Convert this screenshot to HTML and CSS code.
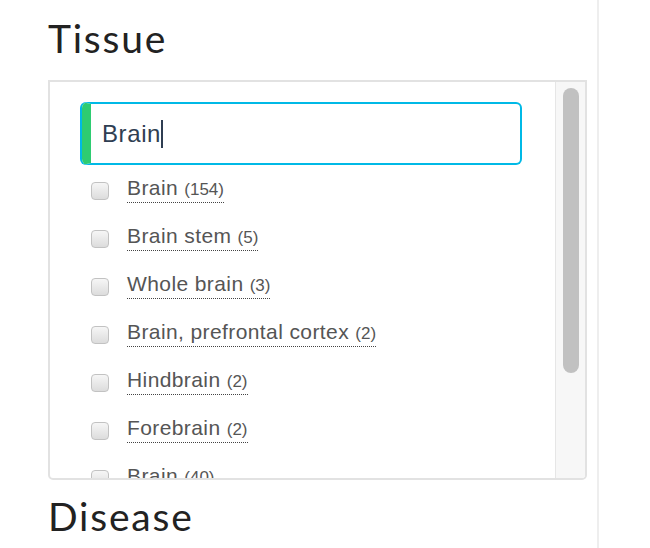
FILE: index.html
```html
<!DOCTYPE html>
<html>
<head>
<meta charset="utf-8">
<link rel="stylesheet" href="styles.css">
</head>
<body>
<div class="panel">
  <h2 class="heading">Tissue</h2>
  <div class="facet-box">
    <div class="facet-content">
      <div class="search">
        <span class="search-text">Brain</span><span class="caret"></span>
      </div>
      <ul class="options">
        <li class="option"><span class="checkbox"></span><span class="label">Brain <small class="count">(154)</small></span></li>
        <li class="option"><span class="checkbox"></span><span class="label">Brain stem <small class="count">(5)</small></span></li>
        <li class="option"><span class="checkbox"></span><span class="label">Whole brain <small class="count">(3)</small></span></li>
        <li class="option"><span class="checkbox"></span><span class="label">Brain, prefrontal cortex <small class="count">(2)</small></span></li>
        <li class="option"><span class="checkbox"></span><span class="label">Hindbrain <small class="count">(2)</small></span></li>
        <li class="option"><span class="checkbox"></span><span class="label">Forebrain <small class="count">(2)</small></span></li>
        <li class="option"><span class="checkbox"></span><span class="label">Brain <small class="count">(40)</small></span></li>
      </ul>
    </div>
    <div class="scroll-track"><div class="scroll-thumb"></div></div>
  </div>
  <h2 class="heading heading-next">Disease</h2>
</div>
</body>
</html>
```

FILE: styles.css
```css
html, body {
  margin: 0;
  padding: 0;
  background: #fff;
  height: 100%;
}

.panel {
  width: 599px;
  height: 548px;
  box-sizing: border-box;
  padding: 14px 10px 0 48px;
  border-right: 2px solid #eeeeee;
  overflow: hidden;
}

.heading {
  margin: 0;
  font-family: "Lato", "Open Sans", sans-serif;
  font-weight: 400;
  font-size: 39px;
  line-height: 48px;
  color: #222;
  letter-spacing: 1.8px;
}

.facet-box {
  margin-top: 18px;
  height: 400px;
  box-sizing: border-box;
  border: 2px solid #e2e2e2;
  border-radius: 0 0 5px 5px;
  display: flex;
  overflow: hidden;
}

.facet-content {
  flex: 1;
  overflow: hidden;
  padding: 20px 0 0 30px;
}

.search {
  width: 440px;
  height: 63px;
  box-sizing: border-box;
  border: 2px solid #00b9e6;
  border-left: 9px solid #2ecc71;
  border-radius: 6px;
  box-shadow: -2px 0 0 0 #00b9e6;
  margin-left: 2px;
  display: flex;
  align-items: center;
  padding-left: 11px;
  font-family: "Liberation Sans", Arial, sans-serif;
  font-size: 24px;
  letter-spacing: 0.6px;
  color: #2f3e52;
}

.caret {
  display: inline-block;
  width: 1.5px;
  height: 28px;
  background: #2f3e52;
  margin-left: 0;
}

.options {
  list-style: none;
  margin: 0;
  padding: 0 0 0 11px;
}

.option {
  height: 48px;
  display: flex;
  align-items: center;
  gap: 18px;
  font-family: "Liberation Sans", Arial, sans-serif;
  color: #555;
}

.checkbox {
  width: 18px;
  height: 18px;
  box-sizing: border-box;
  border: 1px solid #c2c2c2;
  border-radius: 4px;
  background: linear-gradient(#f6f6f6, #dcdcdc);
  margin-top: 3px;
}

.label {
  font-size: 21px;
  line-height: 24px;
  letter-spacing: 0.4px;
  border-bottom: 1.5px dotted #444;
}

.count {
  font-size: 17px;
  letter-spacing: 0;
}

.scroll-track {
  width: 30px;
  box-sizing: border-box;
  border-left: 1px solid #e6e6e6;
  background: #f7f7f7;
  padding: 6px 6px 0 7px;
}

.scroll-thumb {
  width: 16px;
  height: 285px;
  background: #c1c1c1;
  border-radius: 8px;
}

.heading-next {
  margin-top: 12px;
}
```
